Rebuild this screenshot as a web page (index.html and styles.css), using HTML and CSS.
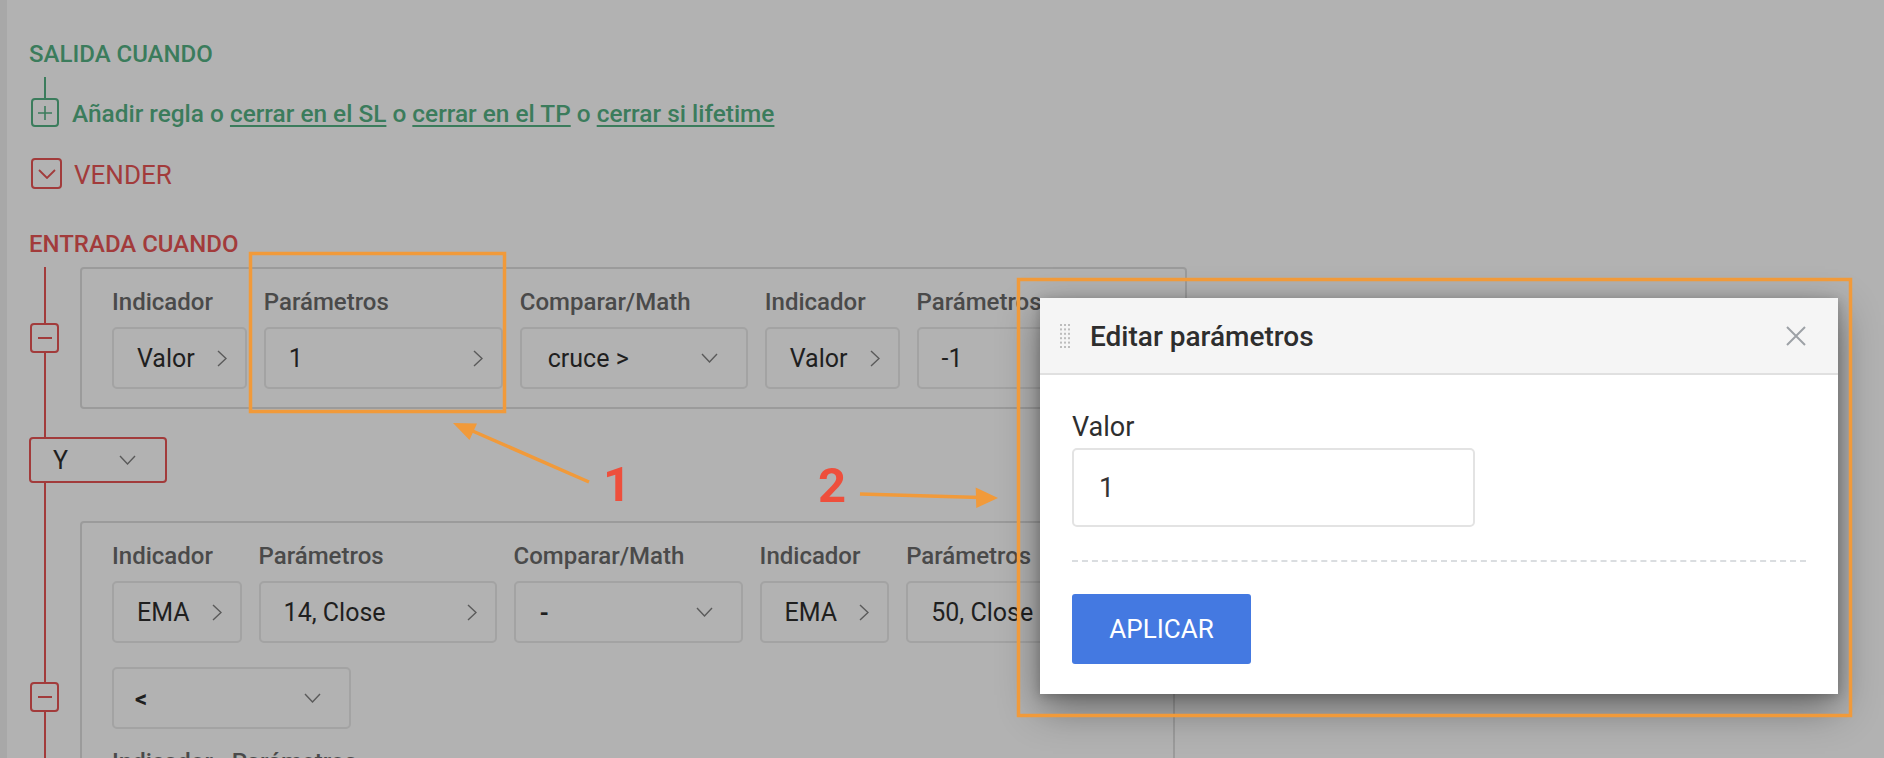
FILE: index.html
```html
<!DOCTYPE html>
<html lang="es">
<head>
<meta charset="utf-8">
<title>Editar parámetros</title>
<link rel="stylesheet" href="styles.css">
</head>
<body>
<div class="app">
  <div class="strip"></div>
  <main class="main">
    <h2 class="sec-title green">SALIDA CUANDO</h2>
    <div class="seg seg-green"></div>
    <div class="add-row">
      <span class="sq sq-green">
        <svg width="16" height="16" viewBox="0 0 16 16"><path d="M8 1v14M1 8h14" stroke="#3b7c5c" stroke-width="1.6" fill="none"/></svg>
      </span>
      <span class="add-text">Añadir regla o <a class="lnk">cerrar en el SL</a> o <a class="lnk">cerrar en el TP</a> o <a class="lnk">cerrar si lifetime</a></span>
    </div>
    <div class="side-row">
      <span class="sq sq-red sq-lg">
        <svg width="18" height="10" viewBox="0 0 18 10"><path d="M1 1l8 8 8-8" stroke="#a23b3b" stroke-width="1.8" fill="none"/></svg>
      </span>
      <span class="side-text">VENDER</span>
    </div>
    <h2 class="sec-title red entrada">ENTRADA CUANDO</h2>

    <div class="tree">
      <div class="rule">
        <div class="rail">
          <div class="seg seg-red grow"></div>
          <span class="sq sq-red sq-min"><svg width="14" height="4" viewBox="0 0 14 4"><path d="M0 2h14" stroke="#a23b3b" stroke-width="2"/></svg></span>
          <div class="seg seg-red grow"></div>
        </div>
        <div class="card">
          <div class="fields">
            <div class="field">
              <div class="lbl">Indicador</div>
              <div class="box btn"><span>Valor</span><svg class="chev-r" width="10" height="17" viewBox="0 0 10 17"><path d="M1 1l8 7.5L1 16" stroke="#5a5a5a" stroke-width="1.4" fill="none"/></svg></div>
            </div>
            <div class="field">
              <div class="lbl">Parámetros</div>
              <div class="box btn w-par"><span>1</span><svg class="chev-r" width="10" height="17" viewBox="0 0 10 17"><path d="M1 1l8 7.5L1 16" stroke="#5a5a5a" stroke-width="1.4" fill="none"/></svg></div>
            </div>
            <div class="field">
              <div class="lbl">Comparar/Math</div>
              <div class="box sel w-cmp"><span>cruce &gt;</span><svg width="17" height="10" viewBox="0 0 17 10"><path d="M1 1l7.5 8L16 1" stroke="#5a5a5a" stroke-width="1.4" fill="none"/></svg></div>
            </div>
            <div class="field">
              <div class="lbl">Indicador</div>
              <div class="box btn"><span>Valor</span><svg class="chev-r" width="10" height="17" viewBox="0 0 10 17"><path d="M1 1l8 7.5L1 16" stroke="#5a5a5a" stroke-width="1.4" fill="none"/></svg></div>
            </div>
            <div class="field">
              <div class="lbl">Parámetros</div>
              <div class="box btn w-par"><span>-1</span><svg class="chev-r" width="10" height="17" viewBox="0 0 10 17"><path d="M1 1l8 7.5L1 16" stroke="#5a5a5a" stroke-width="1.4" fill="none"/></svg></div>
            </div>
          </div>
        </div>
      </div>

      <div class="join">
        <div class="seg seg-red seg-top"></div>
        <div class="ybox"><span>Y</span><svg width="17" height="10" viewBox="0 0 17 10"><path d="M1 1l7.5 8L16 1" stroke="#5a5a5a" stroke-width="1.4" fill="none"/></svg></div>
        <div class="seg seg-red seg-bot"></div>
      </div>

      <div class="rule">
        <div class="rail">
          <div class="seg seg-red seg-lead"></div>
          <span class="sq sq-red sq-min"><svg width="14" height="4" viewBox="0 0 14 4"><path d="M0 2h14" stroke="#a23b3b" stroke-width="2"/></svg></span>
          <div class="seg seg-red grow"></div>
        </div>
        <div class="card card2">
          <div class="fields">
            <div class="field">
              <div class="lbl">Indicador</div>
              <div class="box btn"><span>EMA</span><svg class="chev-r" width="10" height="17" viewBox="0 0 10 17"><path d="M1 1l8 7.5L1 16" stroke="#5a5a5a" stroke-width="1.4" fill="none"/></svg></div>
            </div>
            <div class="field">
              <div class="lbl">Parámetros</div>
              <div class="box btn w-par2"><span>14, Close</span><svg class="chev-r" width="10" height="17" viewBox="0 0 10 17"><path d="M1 1l8 7.5L1 16" stroke="#5a5a5a" stroke-width="1.4" fill="none"/></svg></div>
            </div>
            <div class="field">
              <div class="lbl">Comparar/Math</div>
              <div class="box sel w-cmp2"><span class="strong">-</span><svg width="17" height="10" viewBox="0 0 17 10"><path d="M1 1l7.5 8L16 1" stroke="#5a5a5a" stroke-width="1.4" fill="none"/></svg></div>
            </div>
            <div class="field">
              <div class="lbl">Indicador</div>
              <div class="box btn"><span>EMA</span><svg class="chev-r" width="10" height="17" viewBox="0 0 10 17"><path d="M1 1l8 7.5L1 16" stroke="#5a5a5a" stroke-width="1.4" fill="none"/></svg></div>
            </div>
            <div class="field">
              <div class="lbl">Parámetros</div>
              <div class="box btn w-par2"><span>50, Close</span><svg class="chev-r" width="10" height="17" viewBox="0 0 10 17"><path d="M1 1l8 7.5L1 16" stroke="#5a5a5a" stroke-width="1.4" fill="none"/></svg></div>
            </div>
          </div>
          <div class="box sel w-lt"><span class="strong">&lt;</span><svg width="17" height="10" viewBox="0 0 17 10"><path d="M1 1l7.5 8L16 1" stroke="#5a5a5a" stroke-width="1.4" fill="none"/></svg></div>
          <div class="fields row3">
            <div class="field">
              <div class="lbl">Indicador</div>
              <div class="box btn"><span>Valor</span></div>
            </div>
            <div class="field">
              <div class="lbl">Parámetros</div>
              <div class="box btn w-par2"><span>0</span></div>
            </div>
          </div>
        </div>
      </div>
    </div>
  </main>

  <div class="modal">
    <div class="modal-head">
      <svg class="grip" width="12" height="26" viewBox="0 0 12 26">
        <g fill="#bdbdbd">
          <rect x="1" y="1" width="2" height="2"/><rect x="5" y="1" width="2" height="2"/><rect x="9" y="1" width="2" height="2"/>
          <rect x="1" y="5.4" width="2" height="2"/><rect x="5" y="5.4" width="2" height="2"/><rect x="9" y="5.4" width="2" height="2"/>
          <rect x="1" y="9.8" width="2" height="2"/><rect x="5" y="9.8" width="2" height="2"/><rect x="9" y="9.8" width="2" height="2"/>
          <rect x="1" y="14.2" width="2" height="2"/><rect x="5" y="14.2" width="2" height="2"/><rect x="9" y="14.2" width="2" height="2"/>
          <rect x="1" y="18.6" width="2" height="2"/><rect x="5" y="18.6" width="2" height="2"/><rect x="9" y="18.6" width="2" height="2"/>
          <rect x="1" y="23" width="2" height="2"/><rect x="5" y="23" width="2" height="2"/><rect x="9" y="23" width="2" height="2"/>
        </g>
      </svg>
      <span class="modal-title">Editar parámetros</span>
      <svg class="close" width="22" height="22" viewBox="0 0 22 22"><path d="M2 2l18 18M20 2L2 20" stroke="#9da1a6" stroke-width="2" fill="none"/></svg>
    </div>
    <div class="modal-body">
      <div class="m-label">Valor</div>
      <div class="m-input">1</div>
      <div class="m-divider"></div>
      <div class="m-btn">APLICAR</div>
    </div>
  </div>

  <svg class="annot" width="1884" height="758" viewBox="0 0 1884 758">
    <g fill="none" stroke="#f19a3a" stroke-width="3.5">
      <rect x="250.5" y="253.5" width="254" height="158"/>
      <rect x="1018.5" y="279.5" width="832" height="436"/>
      <line x1="589" y1="482" x2="468" y2="429"/>
      <line x1="860" y1="494" x2="980" y2="497.5"/>
    </g>
    <g fill="#f19a3a">
      <polygon points="453,423 477,423.5 469.5,440"/>
      <polygon points="998,498 975.7,487.4 976.3,508"/>
    </g>
  </svg>
  <span class="num num1">1</span>
  <span class="num num2">2</span>
</div>
</body>
</html>
```

FILE: styles.css
```css
html, body {
  margin: 0;
  padding: 0;
  width: 1884px;
  height: 758px;
  overflow: hidden;
}
body {
  background: #b2b2b2;
  font-family: Roboto, "Liberation Sans", Arial, sans-serif;
  color: #1f1f1f;
}
.app {
  display: flex;
  width: 1884px;
  height: 758px;
  position: relative;
  overflow: hidden;
}
.strip {
  width: 7px;
  flex: none;
  background: #a8a8a8;
}
.main {
  flex: 1;
  padding: 40px 0 0 22px;
}
.sec-title {
  margin: 0;
  font-size: 24px;
  line-height: 28px;
  font-weight: 500;
}
.green { color: #3b7c5c; }
.red { color: #a23b3b; }
.entrada { margin-top: 40px; }

.seg { width: 2px; margin-left: 15px; }
.seg-green { background: #3b7c5c; height: 21px; margin-top: 9px; }
.seg-red { background: #a23b3b; }
.grow { flex: 1; }

.sq {
  box-sizing: border-box;
  display: flex;
  align-items: center;
  justify-content: center;
  border-radius: 4px;
  flex: none;
}
.sq-green {
  width: 28px;
  height: 29px;
  border: 2px solid #3b7c5c;
  margin-left: 2px;
}
.sq-red { border: 2px solid #a23b3b; }
.sq-lg { width: 31px; height: 31px; margin-left: 2px; }
.sq-min { width: 29px; height: 30px; margin-left: 1px; }

.add-row {
  display: flex;
  align-items: flex-start;
  gap: 13px;
}
.add-text {
  margin-top: 2px;
  font-size: 24.4px;
  line-height: 28px;
  font-weight: 500;
  color: #3b7c5c;
  white-space: nowrap;
}
.lnk {
  color: #3b7c5c;
  text-decoration: underline;
  text-decoration-thickness: 2px;
  text-underline-offset: 3px;
}
.side-row {
  display: flex;
  align-items: flex-start;
  gap: 12px;
  margin-top: 30px;
}
.side-text {
  margin-top: 2px;
  font-size: 26px;
  line-height: 30px;
  color: #a23b3b;
}

.tree { margin-top: 9px; }
.rule { display: flex; }
.rail {
  width: 32px;
  flex: none;
  display: flex;
  flex-direction: column;
  align-items: flex-start;
}
.seg-lead { height: 161px; }

.card {
  margin-left: 19px;
  border: 2px solid #9b9b9b;
  border-radius: 4px;
  padding: 19px 29px 18px 30px;
  display: flex;
  flex-direction: column;
  align-items: flex-start;
}
.card2 { padding-bottom: 60px; }
.fields {
  display: flex;
  gap: 17px;
}
.field {
  display: flex;
  flex-direction: column;
}
.lbl {
  font-size: 24px;
  line-height: 28px;
  font-weight: 500;
  color: #4a4a4a;
  margin-bottom: 11px;
  white-space: nowrap;
}
.box {
  box-sizing: border-box;
  height: 62px;
  border: 2px solid #a3a3a3;
  border-radius: 5px;
  display: flex;
  align-items: center;
  font-size: 25px;
  line-height: 30px;
  color: #1f1f1f;
  white-space: nowrap;
}
.box span { padding-top: 2px; }
.btn {
  padding: 0 18px 0 23px;
  gap: 22px;
}
.sel {
  padding: 0 28px 0 26px;
  justify-content: space-between;
}
.w-par { width: 239px; justify-content: space-between; }
.w-par2 { width: 238px; justify-content: space-between; }
.w-cmp { width: 228px; }
.w-cmp2 { width: 229px; padding-left: 24px; }
.w-lt { width: 239px; margin-top: 24px; padding-left: 21px; }
.strong { font-weight: 700; font-size: 24px; }
.row3 { margin-top: 19px; }
.chev-r { flex: none; }

.join {
  display: flex;
  flex-direction: column;
  align-items: flex-start;
}
.seg-top { height: 28px; }
.seg-bot { height: 38px; }
.ybox {
  box-sizing: border-box;
  width: 138px;
  height: 46px;
  border: 2px solid #a23b3b;
  border-radius: 4px;
  display: flex;
  align-items: center;
  justify-content: space-between;
  padding: 0 29px 0 22px;
  font-size: 25px;
  color: #1f1f1f;
}

/* modal */
.modal {
  position: absolute;
  left: 1040px;
  top: 298px;
  width: 798px;
  background: #fff;
  box-shadow: 0 14px 38px rgba(0, 0, 0, 0.42), 0 2px 10px rgba(0, 0, 0, 0.2);
  z-index: 5;
}
.modal-head {
  box-sizing: border-box;
  background: #f5f5f5;
  border-bottom: 2px solid #e0e0e0;
  display: flex;
  align-items: center;
  padding: 0 32px 0 19px;
  height: 77px;
}
.grip { flex: none; }
.modal-title {
  margin-left: 19px;
  font-size: 28px;
  font-weight: 500;
  color: #2e2e2e;
  flex: 1;
  padding-top: 2px;
}
.close { flex: none; margin-right: -1px; }
.modal-body {
  padding: 36px 32px 30px 32px;
}
.m-label {
  font-size: 27px;
  line-height: 32px;
  color: #2e2e2e;
}
.m-input {
  box-sizing: border-box;
  margin-top: 5px;
  width: 403px;
  height: 79px;
  border: 2px solid #e3e3e3;
  border-radius: 5px;
  padding-left: 25px;
  display: flex;
  align-items: center;
  font-size: 27px;
  color: #333;
}
.m-divider {
  margin-top: 33px;
  border-top: 2px dashed #dadde0;
}
.m-btn {
  margin-top: 32px;
  width: 179px;
  height: 70px;
  background: #4479e1;
  border-radius: 3px;
  color: #fff;
  font-size: 26px;
  display: flex;
  align-items: center;
  justify-content: center;
}

/* annotations */
.annot {
  position: absolute;
  left: 0;
  top: 0;
  z-index: 10;
  pointer-events: none;
}
.num {
  position: absolute;
  z-index: 11;
  font-family: Roboto, "Liberation Sans", Arial, sans-serif;
  font-weight: 700;
  font-size: 49px;
  line-height: 1;
  color: #ee4f3c;
}
.num1 { left: 603px; top: 460px; }
.num2 { left: 818px; top: 461px; }
```
